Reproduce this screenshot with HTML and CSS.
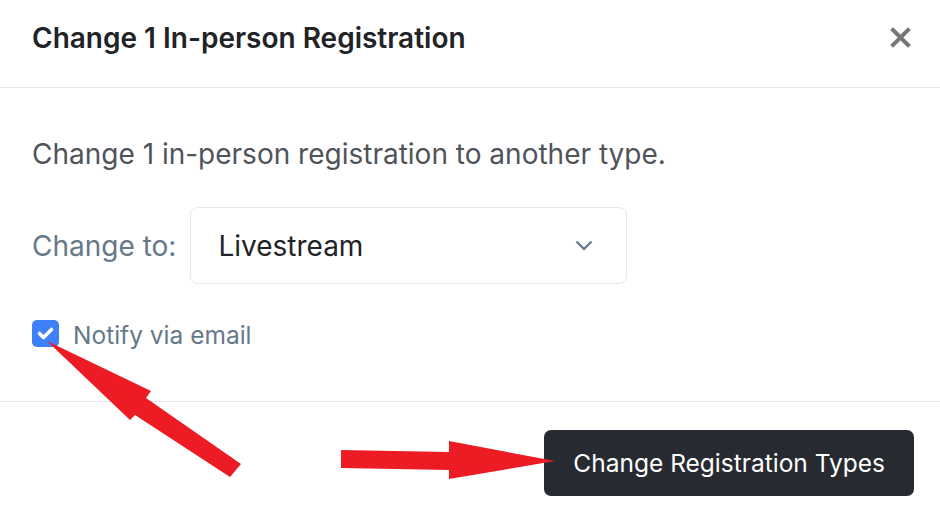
FILE: index.html
```html
<!DOCTYPE html>
<html lang="en">
<head>
    <meta charset="UTF-8">
    <meta name="viewport" content="width=device-width, initial-scale=1.0">
    <title>Change Registration</title>
    <link rel="stylesheet" href="styles.css">
</head>
<body>
    <div class="modal">
        <!-- Header -->
        <header class="modal-header">
            <h1>Change 1 In-person Registration</h1>
            <button class="close-btn" aria-label="Close">
                <svg width="21" height="21" viewBox="0 0 21 21">
                    <path d="M3 3 L18 18 M18 3 L3 18" stroke="currentColor" stroke-width="4" stroke-linecap="square" fill="none"/>
                </svg>
            </button>
        </header>

        <!-- Body -->
        <main class="modal-body">
            <p class="intro">Change 1 in-person registration to another type.</p>
            <div class="change-row">
                <label class="change-label">Change to:</label>
                <div class="select-box">
                    <span>Livestream</span>
                    <svg width="18" height="11" viewBox="0 0 18 11">
                        <path d="M1.5 1.5 L9 9 L16.5 1.5" stroke="currentColor" stroke-width="2.4" fill="none"/>
                    </svg>
                </div>
            </div>
            <div class="notify-row">
                <span class="checkbox">
                    <svg width="27" height="27" viewBox="0 0 27 27">
                        <path d="M7.5 13.5 L11.5 17.5 L19.5 9.5" stroke="#fff" stroke-width="3.6" stroke-linecap="round" stroke-linejoin="round" fill="none"/>
                    </svg>
                </span>
                <span class="notify-label">Notify via email</span>
            </div>
        </main>

        <!-- Footer -->
        <footer class="modal-footer">
            <button class="primary-btn">Change Registration Types</button>
        </footer>

        <!-- Annotation arrows -->
        <svg class="arrows" width="940" height="512" viewBox="0 0 940 512">
            <polygon fill="#ed1c24" points="47,341 151,391 146,398 241,464 230,477 135,415 130,420"/>
            <polygon fill="#ed1c24" points="341,450 449,452 449,441 555,461 449,479 449,470 341,468"/>
        </svg>
    </div>
</body>
</html>
```

FILE: styles.css
```css
body {
    margin: 0;
    padding: 0;
    background-color: #ffffff;
    font-family: Inter, "Noto Sans", sans-serif;
    color: #212327;
}
.modal {
    position: relative;
    width: 940px;
    height: 512px;
    overflow: hidden;
}
.modal-header {
    display: flex;
    justify-content: space-between;
    align-items: flex-start;
    box-sizing: border-box;
    height: 88px;
    padding: 20px 29px 0 32px;
    border-bottom: 1px solid #e6e7ea;
}
.modal-header h1 {
    margin: 0;
    font-size: 28px;
    line-height: 36px;
    font-weight: 600;
    color: #212327;
}
.close-btn {
    display: flex;
    margin-top: 7px;
    padding: 0;
    border: none;
    background: none;
    color: #777777;
    cursor: pointer;
}
.modal-body {
    padding: 48px 32px 54px;
}
.intro {
    margin: 0 0 35px;
    font-size: 28px;
    line-height: 36px;
    color: #4f545b;
}
.change-row {
    display: flex;
    align-items: center;
    gap: 14px;
}
.change-label {
    font-size: 28px;
    color: #66788a;
}
.select-box {
    display: flex;
    justify-content: space-between;
    align-items: center;
    box-sizing: border-box;
    width: 437px;
    height: 77px;
    padding: 0 33px 0 27px;
    border: 1px solid #e6e7ea;
    border-radius: 8px;
    font-size: 28px;
    color: #212327;
}
.select-box svg {
    color: #6b7b8f;
}
.notify-row {
    display: flex;
    align-items: center;
    gap: 14px;
    height: 27px;
    margin-top: 36px;
}
.checkbox {
    display: flex;
    width: 27px;
    height: 27px;
    border-radius: 5px;
    background-color: #3d80f7;
}
.notify-label {
    padding-top: 3px;
    font-size: 24.5px;
    line-height: 27px;
    color: #66788a;
}
.modal-footer {
    display: flex;
    justify-content: flex-end;
    padding: 28px 26px 0;
    border-top: 1px solid #e6e7ea;
}
.primary-btn {
    box-sizing: border-box;
    height: 66px;
    padding: 0 29px;
    border: none;
    border-radius: 7px;
    background-color: #272a31;
    color: #ffffff;
    font-family: Inter, "Noto Sans", sans-serif;
    font-size: 24.5px;
    cursor: pointer;
}
.arrows {
    position: absolute;
    top: 0;
    left: 0;
    pointer-events: none;
}
```
